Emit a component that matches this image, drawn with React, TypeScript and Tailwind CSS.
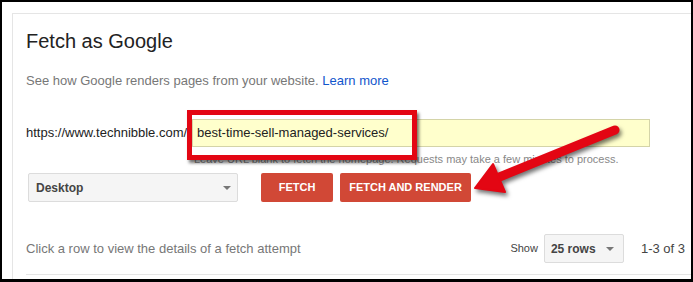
function Caret() {
  return (
    <svg width="8" height="4" viewBox="0 0 8 4" className="shrink-0">
      <path d="M0 0 L8 0 L4 4 Z" fill="#777777" />
    </svg>
  );
}

function Annotations() {
  // red highlight box + arrow drawn on top of the screenshot
  return (
    <div className="pointer-events-none absolute inset-0">
      <div className="absolute left-[185px] top-[108px] h-[50px] w-[230px] border-[5px] border-[#e30613] shadow-[2px_3px_3px_rgba(0,0,0,0.55)]" />
      <svg
        width="693"
        height="282"
        viewBox="0 0 693 282"
        className="absolute left-0 top-0 drop-shadow-[2px_3px_2px_rgba(0,0,0,0.55)]"
      >
        <line x1="613" y1="128" x2="495" y2="176" stroke="#e30613" strokeWidth="9" strokeLinecap="round" />
        <path d="M473 186 L491 162 L503 190 Z" fill="#e30613" stroke="#e30613" strokeWidth="2" strokeLinejoin="round" />
      </svg>
    </div>
  );
}

export default function App() {
  return (
    <div className="relative h-[282px] w-[693px] overflow-hidden border-x-2 border-t-2 border-b-[3px] border-black bg-white font-['Liberation_Sans',Arial,sans-serif]">
      <div className="h-full pl-[10px] pt-[11px]">
        <div className="h-full border-l border-t border-[#e5e5e5] pl-[13px] pt-[12px]">
          <h1 className="h-[30px] text-[20px] leading-[30px] text-[#222222]">Fetch as Google</h1>

          <p className="mt-[15px] h-[20px] text-[13px] leading-[20px] text-[#777777]">
            See how Google renders pages from your website.{' '}
            <span className="text-[#1155cc]">Learn more</span>
          </p>

          <div className="mt-[28px] flex h-[28px] items-center">
            <span className="w-[166px] shrink-0 text-[13px] text-[#222222]">https://www.technibble.com/</span>
            <div className="flex h-[28px] w-[458px] items-center border border-[#d4d4a8] bg-[#ffffcc] pl-[4px] text-[13px] text-[#222222]">
              best-time-sell-managed-services/
            </div>
          </div>

          <p className="mt-[5px] h-[14px] pl-[168px] text-[11px] leading-[14px] text-[#888888]">
            Leave URL blank to fetch the homepage. Requests may take a few minutes to process.
          </p>

          <div className="mt-[7px] flex h-[29px] items-center">
            <div className="ml-[2px] flex h-[29px] w-[210px] items-center justify-between rounded-[2px] border border-[#dcdcdc] bg-[#f5f5f5] pl-[7px] pr-[6px]">
              <span className="text-[12px] font-bold text-[#444444]">Desktop</span>
              <Caret />
            </div>
            <button className="ml-[23px] h-[29px] w-[72px] rounded-[2px] bg-[#d14836] text-[11px] font-bold text-white">
              FETCH
            </button>
            <button className="ml-[7px] h-[29px] w-[131px] rounded-[2px] bg-[#d14836] text-[11px] font-bold text-white">
              FETCH AND RENDER
            </button>
          </div>

          <div className="mt-[32px] flex h-[29px] items-center pr-[6px]">
            <span className="flex-1 text-[13px] text-[#777777]">Click a row to view the details of a fetch attempt</span>
            <span className="text-[11px] text-[#444444]">Show</span>
            <div className="ml-[6px] flex h-[29px] w-[80px] items-center justify-between rounded-[2px] border border-[#dcdcdc] bg-[#f5f5f5] pl-[6px] pr-[9px]">
              <span className="text-[12px] font-bold text-[#444444]">25 rows</span>
              <Caret />
            </div>
            <span className="ml-[17px] text-[13px] text-[#444444]">1-3 of 3</span>
          </div>

          <div className="mt-[11px] border-t border-[#e5e5e5]" />
        </div>
      </div>
      <Annotations />
    </div>
  );
}
